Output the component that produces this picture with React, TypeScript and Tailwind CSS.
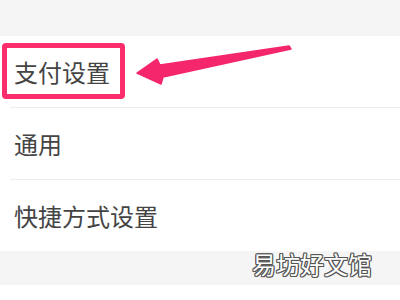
const rows = ["支付设置", "通用", "快捷方式设置"];

const App = () => {
  return (
    <div
      className="relative w-[400px] h-[300px] overflow-hidden bg-white"
      style={{ fontFamily: '"Noto Sans CJK SC", "Noto Sans", sans-serif' }}
    >
      {/* top gray band */}
      <div className="h-[36px] bg-[#f5f5f5]" />

      {/* settings list */}
      <div className="flex flex-col bg-white">
        {rows.map((label, i) => (
          <div key={label} className="flex flex-col">
            <div className="flex items-center h-[71px] pl-[14px] text-[24px] text-[#444] leading-none">
              {label}
            </div>
            {i < rows.length - 1 && (
              <div className="ml-[10px] h-px bg-[#ededed]" />
            )}
          </div>
        ))}
      </div>

      {/* bottom gray band with watermark */}
      <div className="flex justify-end items-start h-[34px] bg-[#f5f5f5] pr-[28px]">
        <span
          className="text-[24px] leading-none text-white pt-[1px]"
          style={{
            textShadow:
              "1px 0 0 #555, -1px 0 0 #555, 0 1px 0 #555, 0 -1px 0 #555, 1px 1px 0 #555, -1px -1px 0 #555, 1px -1px 0 #555, -1px 1px 0 #555",
          }}
        >
          易坊好文馆
        </span>
      </div>

      {/* annotation: highlight box */}
      <div className="absolute left-[2px] top-[43px] w-[123px] h-[56px] border-[5px] border-[#fb2d6c] rounded-[4px]" />

      {/* annotation: arrow */}
      <svg
        className="absolute left-0 top-0"
        width="400"
        height="300"
        viewBox="0 0 400 300"
      >
        <path
          d="M137 73 L157 59 L160 65 L289 46 L291 49 L163 77 L161 84 Z"
          fill="#f5266b"
          stroke="#f5266b"
          strokeWidth="1.5"
          strokeLinejoin="round"
        />
      </svg>
    </div>
  );
};

export default App;
